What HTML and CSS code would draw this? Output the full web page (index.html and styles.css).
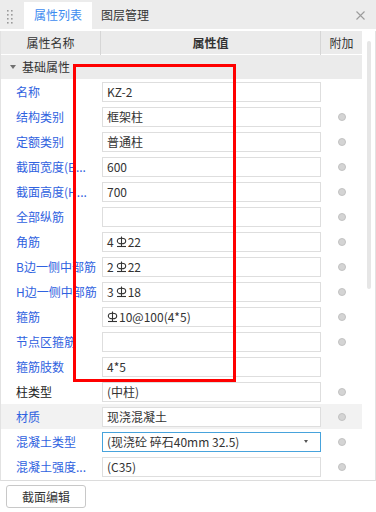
FILE: index.html
```html
<!DOCTYPE html>
<html lang="zh-CN">
<head>
<meta charset="utf-8">
<link rel="stylesheet" href="styles.css">
</head>
<body>
<div class="panel">
  <div class="tabbar">
    <svg class="grip" width="6" height="16" viewBox="0 0 6 16"><g fill="#9a9a9a"><rect x="0" y="0" width="1.6" height="1.6"/><rect x="4" y="0" width="1.6" height="1.6"/><rect x="0" y="4" width="1.6" height="1.6"/><rect x="4" y="4" width="1.6" height="1.6"/><rect x="0" y="8" width="1.6" height="1.6"/><rect x="4" y="8" width="1.6" height="1.6"/><rect x="0" y="12" width="1.6" height="1.6"/><rect x="4" y="12" width="1.6" height="1.6"/></g></svg>
    <div class="tab active">属性列表</div>
    <div class="tab">图层管理</div>
    <svg class="close" width="9" height="9" viewBox="0 0 9 9"><path d="M0.5 0.5L8.5 8.5M8.5 0.5L0.5 8.5" stroke="#9c9c9c" stroke-width="1.1"/></svg>
  </div>
  <div class="body">
    <div class="table">
      <div class="head">
        <div class="hc">属性名称</div>
        <div class="hc bold">属性值</div>
        <div class="hc">附加</div>
      </div>
      <div class="group"><span class="tri"></span>基础属性</div>

      <div class="row"><div class="lbl blue">名称</div><div class="val">KZ-2</div><div class="add"></div></div>
      <div class="row"><div class="lbl blue">结构类别</div><div class="val">框架柱</div><div class="add"><i class="dot"></i></div></div>
      <div class="row"><div class="lbl blue">定额类别</div><div class="val">普通柱</div><div class="add"><i class="dot"></i></div></div>
      <div class="row"><div class="lbl blue">截面宽度(B...</div><div class="val">600</div><div class="add"><i class="dot"></i></div></div>
      <div class="row"><div class="lbl blue">截面高度(H...</div><div class="val">700</div><div class="add"><i class="dot"></i></div></div>
      <div class="row"><div class="lbl blue">全部纵筋</div><div class="val"></div><div class="add"><i class="dot"></i></div></div>
      <div class="row"><div class="lbl blue">角筋</div><div class="val">4<svg class="rb" width="11" height="12" viewBox="0 0 11 12"><g stroke="#333" stroke-width="1.1" fill="none"><ellipse cx="5.5" cy="5" rx="4.2" ry="2.8"/><line x1="5.5" y1="0.5" x2="5.5" y2="10.5"/><line x1="1" y1="10.5" x2="10" y2="10.5"/></g></svg>22</div><div class="add"><i class="dot"></i></div></div>
      <div class="row"><div class="lbl blue wide">B边一侧中部筋</div><div class="val">2<svg class="rb" width="11" height="12" viewBox="0 0 11 12"><g stroke="#333" stroke-width="1.1" fill="none"><ellipse cx="5.5" cy="5" rx="4.2" ry="2.8"/><line x1="5.5" y1="0.5" x2="5.5" y2="10.5"/><line x1="1" y1="10.5" x2="10" y2="10.5"/></g></svg>22</div><div class="add"><i class="dot"></i></div></div>
      <div class="row"><div class="lbl blue wide">H边一侧中部筋</div><div class="val">3<svg class="rb" width="11" height="12" viewBox="0 0 11 12"><g stroke="#333" stroke-width="1.1" fill="none"><ellipse cx="5.5" cy="5" rx="4.2" ry="2.8"/><line x1="5.5" y1="0.5" x2="5.5" y2="10.5"/><line x1="1" y1="10.5" x2="10" y2="10.5"/></g></svg>18</div><div class="add"><i class="dot"></i></div></div>
      <div class="row"><div class="lbl blue">箍筋</div><div class="val"><svg class="rb first" width="11" height="12" viewBox="0 0 11 12"><g stroke="#333" stroke-width="1.1" fill="none"><ellipse cx="5.5" cy="5" rx="4.2" ry="2.8"/><line x1="5.5" y1="0.5" x2="5.5" y2="10.5"/><line x1="1" y1="10.5" x2="10" y2="10.5"/></g></svg>10@100(4*5)</div><div class="add"><i class="dot"></i></div></div>
      <div class="row"><div class="lbl blue">节点区箍筋</div><div class="val"></div><div class="add"><i class="dot"></i></div></div>
      <div class="row"><div class="lbl blue">箍筋肢数</div><div class="val">4*5</div><div class="add"></div></div>
      <div class="row"><div class="lbl">柱类型</div><div class="val">(中柱)</div><div class="add"><i class="dot"></i></div></div>
      <div class="row shade"><div class="lbl blue">材质</div><div class="val">现浇混凝土</div><div class="add"><i class="dot"></i></div></div>
      <div class="row"><div class="lbl blue">混凝土类型</div><div class="val select"><span>(现浇砼 碎石40mm 32.5)</span><span class="caret"></span></div><div class="add"><i class="dot"></i></div></div>
      <div class="row"><div class="lbl blue">混凝土强度...</div><div class="val">(C35)</div><div class="add"><i class="dot"></i></div></div>
    </div>
    <div class="scroll"><div class="thumb"></div></div>
  </div>
  <div class="mark"></div>
</div>
<div class="footer"><button class="btn">截面编辑</button></div>
</body>
</html>
```

FILE: styles.css
```css
* { box-sizing: border-box; }
html, body { margin: 0; padding: 0; background: #fff; }
body {
  width: 376px;
  height: 512px;
  overflow: hidden;
  font-family: "Noto Sans CJK SC", "Microsoft YaHei", sans-serif;
  font-size: 12px;
  color: #333;
}
.panel { position: relative; }
.tabbar {
  height: 31px;
  background: #ececec;
  display: flex;
  align-items: flex-start;
  border-bottom: 2px solid #fff;
  position: relative;
}
.grip { margin: 10px 0 0 7px; }
.tab {
  height: 27px;
  margin-top: 2px;
  line-height: 26px;
  text-align: center;
}
.tab.active {
  background: #fff;
  color: #3d8bf0;
  width: 68px;
  margin-left: 11px;
}
.tab:not(.active) { margin-left: 9px; }
.close { position: absolute; right: 11px; top: 11px; }

.body {
  display: flex;
  border-left: 1px solid #e2e2e2;
  border-right: 1px solid #e2e2e2;
  border-bottom: 1px solid #dcdcdc;
  height: 450px;
}
.table { width: 361px; }
.head {
  display: grid;
  grid-template-columns: 100px 220px 41px;
  height: 24px;
  background: #ebebeb;
  border-bottom: 1px solid #fff;
}
.hc {
  text-align: center;
  line-height: 24px;
  border-right: 1px solid #d6d6d6;
}
.hc:last-child { border-right: none; }
.hc.bold { font-weight: 700; }
.group {
  height: 24px;
  background: #ebebeb;
  line-height: 24px;
  padding-left: 21px;
  position: relative;
}
.tri {
  position: absolute;
  left: 9px;
  top: 10px;
  width: 0; height: 0;
  border-left: 3px solid transparent;
  border-right: 3px solid transparent;
  border-top: 4px solid #707070;
}
.row {
  display: grid;
  grid-template-columns: 100px 220px 41px;
  height: 25px;
  align-items: center;
}
.row.shade { background: #f2f2f2; }
.lbl {
  padding-left: 15px;
  white-space: nowrap;
  color: #222;
}
.blue { color: #2f62e0; }
.val {
  margin-left: 1px;
  height: 20px;
  border: 1px solid #dedede;
  background: #fff;
  line-height: 18px;
  padding: 0 4px;
  white-space: nowrap;
  display: flex;
  align-items: center;
}
.rb { margin: 0 1px 0 2px; flex: none; }
.rb.first { margin-left: 0; }
.val.select {
  border-color: #47a3dc;
  justify-content: space-between;
  padding-right: 12px;
}
.caret {
  width: 0; height: 0;
  border-left: 2.5px solid transparent;
  border-right: 2.5px solid transparent;
  border-top: 3px solid #555;
}
.add { display: flex; justify-content: center; align-items: center; }
.dot {
  display: block;
  width: 8px; height: 8px;
  border-radius: 50%;
  background: #d4d4d4;
  border: 1px solid #c2c2c2;
  margin-left: 1px;
}
.scroll { flex: 1; position: relative; }
.thumb {
  position: absolute;
  left: 5px;
  top: 10px;
  width: 4px;
  height: 248px;
  background: #e6e6e6;
  border-radius: 2px;
}
.mark {
  position: absolute;
  left: 73px;
  top: 64px;
  width: 163px;
  height: 318px;
  border: 3px solid #ff0000;
}
.footer { padding: 4px 0 0 6px; }
.btn {
  width: 80px;
  height: 23px;
  border: 1px solid #c8c8c8;
  border-radius: 3px;
  background: #fff;
  font-family: inherit;
  font-size: 12px;
  color: #333;
  padding: 0;
}
```
